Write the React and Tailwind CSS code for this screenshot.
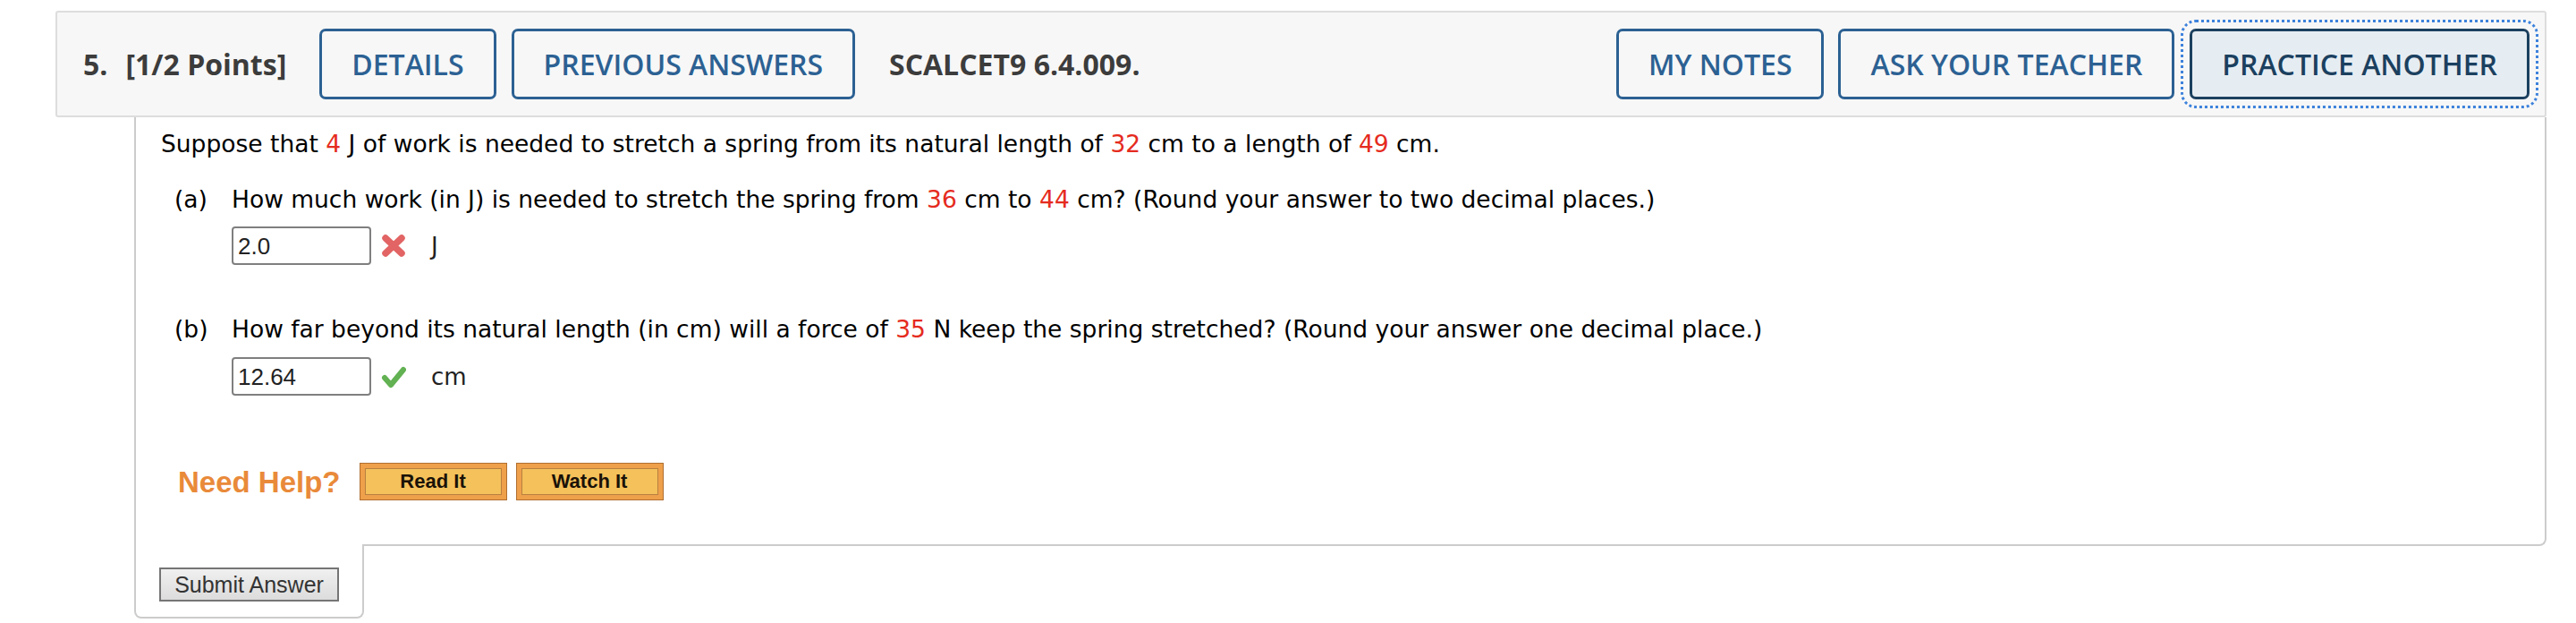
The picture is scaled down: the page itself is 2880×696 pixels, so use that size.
import React from "react";

const Num = ({ children }) => <span className="text-[#e52b20]">{children}</span>;

const HeaderButton = ({ children, active }) => (
  <button
    className={`h-[79px] px-[33px] rounded-[7px] border-[3px] text-[32px] font-semibold leading-none ${
      active
        ? "bg-[#e6edf2] border-[#1b405f] text-[#1b405f] outline-dotted outline-[3px] outline-offset-[7px] outline-[#3d82dc]"
        : "bg-transparent border-[#2c6193] text-[#2c6193]"
    }`}
  >
    {children}
  </button>
);

const CrossIcon = () => (
  <svg width="28" height="27" viewBox="0 0 28 27">
    <path d="M5 5 L23 22 M23 5 L5 22" stroke="#e26464" strokeWidth="7.5" strokeLinecap="round" />
  </svg>
);

const CheckIcon = () => (
  <svg width="28" height="27" viewBox="0 0 28 27">
    <path d="M4 15 L11 23 L25 6" stroke="#62b152" strokeWidth="6" strokeLinecap="round" strokeLinejoin="round" fill="none" />
  </svg>
);

const AnswerRow = ({ value, icon, unit }) => (
  <div className="flex items-center ml-[79px]">
    <div className="w-[156px] h-[43px] border-2 border-[#7f7f7f] rounded-[4px] bg-white flex items-center pl-[5px] text-[26px] text-[#222] font-['Liberation_Sans',sans-serif]">
      {value}
    </div>
    <div className="ml-[11px] w-[28px] flex justify-center">{icon}</div>
    <span className="ml-[28px] text-[26px] text-[#222]">{unit}</span>
  </div>
);

const HelpButton = ({ children }) => (
  <div className="w-[165px] h-[42px] border border-[#b06f32] bg-[#eea04a] p-[5px]">
    <div className="h-full border border-[#b98040] bg-[#f4c15b] flex items-center justify-center text-[22px] font-bold text-[#1a1208] font-['Liberation_Sans',sans-serif]">
      {children}
    </div>
  </div>
);

export default function App() {
  return (
    <div className="min-h-screen bg-white pt-[12px] pl-[62px] pr-[33px]">
      {/* question header */}
      <div className="flex items-center h-[119px] border-2 border-[#dddddd] rounded-[3px] bg-[#f7f7f7] pl-[29px] pr-[17px] font-['Open_Sans',sans-serif]">
        <span className="text-[32px] font-bold text-[#3c3c3c]">5.</span>
        <span className="ml-[20px] text-[32px] font-bold text-[#3c3c3c]">[1/2 Points]</span>
        <div className="ml-[37px] flex gap-[17px]">
          <HeaderButton>DETAILS</HeaderButton>
          <HeaderButton>PREVIOUS ANSWERS</HeaderButton>
        </div>
        <span className="ml-[38px] text-[32px] font-bold text-[#3c3c3c]">SCALCET9 6.4.009.</span>
        <div className="ml-auto flex gap-[16px]">
          <HeaderButton>MY NOTES</HeaderButton>
          <HeaderButton>ASK YOUR TEACHER</HeaderButton>
          <div className="ml-[1px]">
            <HeaderButton active>PRACTICE ANOTHER</HeaderButton>
          </div>
        </div>
      </div>

      {/* question body */}
      <div className="ml-[88px]">
        <div className="border-x-2 border-b-2 border-[#cccccc] rounded-br-[8px] pl-[28px] pt-[12px] pb-[49px] font-['DejaVu_Sans',sans-serif] text-[26.5px] leading-[36px] text-black">
          <p>
            Suppose that <Num>4</Num> J of work is needed to stretch a spring from its natural length of{" "}
            <Num>32</Num> cm to a length of <Num>49</Num> cm.
          </p>

          <div className="mt-[26px] flex ml-[15px]">
            <span className="w-[64px]">(a)</span>
            <span>
              How much work (in J) is needed to stretch the spring from <Num>36</Num> cm to <Num>44</Num> cm? (Round
              your answer to two decimal places.)
            </span>
          </div>
          <div className="mt-[12px]">
            <AnswerRow value="2.0" icon={<CrossIcon />} unit="J" />
          </div>

          <div className="mt-[54px] flex ml-[15px]">
            <span className="w-[64px]">(b)</span>
            <span>
              How far beyond its natural length (in cm) will a force of <Num>35</Num> N keep the spring stretched?
              (Round your answer one decimal place.)
            </span>
          </div>
          <div className="mt-[13px]">
            <AnswerRow value="12.64" icon={<CheckIcon />} unit="cm" />
          </div>

          <div className="mt-[75px] flex items-center ml-[19px]">
            <span className="text-[33px] font-bold text-[#e98a3a] font-['Liberation_Sans',sans-serif] leading-none">
              Need Help?
            </span>
            <div className="ml-[21px] flex gap-[10px]">
              <HelpButton>Read It</HelpButton>
              <HelpButton>Watch It</HelpButton>
            </div>
          </div>
        </div>

        {/* submit tab */}
        <div className="relative -mt-[2px] w-[257px] h-[83px] bg-white border-x-2 border-b-2 border-[#cccccc] rounded-b-[8px] pt-[26px] pl-[26px]">
          <button className="w-[201px] h-[38px] border-2 border-[#757575] bg-gradient-to-b from-[#f0f0f0] to-[#dcdcdc] text-[25px] leading-none text-[#333] font-['Liberation_Sans',sans-serif]">
            Submit Answer
          </button>
        </div>
      </div>
    </div>
  );
}
